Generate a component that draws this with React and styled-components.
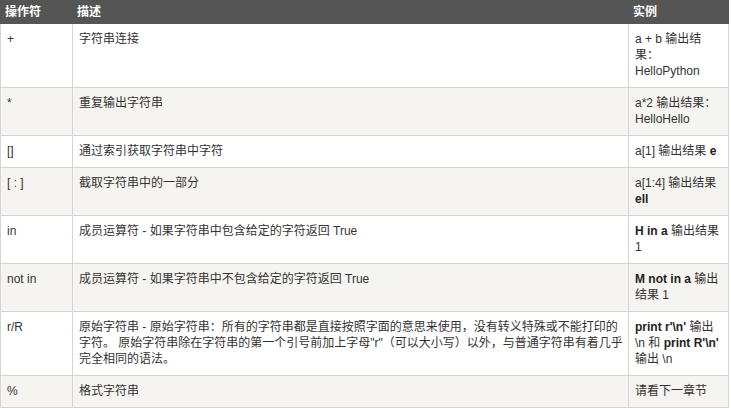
import React from "react";
import styled, { createGlobalStyle } from "styled-components";

const GlobalStyle = createGlobalStyle`
  body {
    margin: 0;
    background: #fff;
    font-family: "Liberation Sans", "Noto Sans CJK SC", sans-serif;
  }
`;

const rows = [
  { op: "+", desc: "字符串连接", example: <>a + b 输出结果：HelloPython</> },
  { op: "*", desc: "重复输出字符串", example: <>a*2 输出结果：HelloHello</> },
  { op: "[]", desc: "通过索引获取字符串中字符", example: <>a[1] 输出结果 <b>e</b></> },
  { op: "[ : ]", desc: "截取字符串中的一部分", example: <>a[1:4] 输出结果 <b>ell</b></> },
  {
    op: "in",
    desc: "成员运算符 - 如果字符串中包含给定的字符返回 True",
    example: <><b>H in a</b> 输出结果 1</>,
  },
  {
    op: "not in",
    desc: "成员运算符 - 如果字符串中不包含给定的字符返回 True",
    example: <><b>M not in a</b> 输出结果 1</>,
  },
  {
    op: "r/R",
    desc: "原始字符串 - 原始字符串：所有的字符串都是直接按照字面的意思来使用，没有转义特殊或不能打印的字符。 原始字符串除在字符串的第一个引号前加上字母\"r\"（可以大小写）以外，与普通字符串有着几乎完全相同的语法。",
    example: <><b>print r'\n'</b> 输出 \n 和 <b>print R'\n'</b> 输出 \n</>,
  },
  { op: "%", desc: "格式字符串", example: <>请看下一章节</> },
];

export default function App() {
  return (
    <>
      <GlobalStyle />
      <Table>
        <colgroup>
          <col style={{ width: 72 }} />
          <col />
          <col style={{ width: 100 }} />
        </colgroup>
        <thead>
          <tr>
            <Th>操作符</Th>
            <Th>描述</Th>
            <Th>实例</Th>
          </tr>
        </thead>
        <tbody>
          {rows.map((r) => (
            <Row key={r.op}>
              <Td>{r.op}</Td>
              <Td>{r.desc}</Td>
              <Td>{r.example}</Td>
            </Row>
          ))}
        </tbody>
      </Table>
    </>
  );
}

const Table = styled.table`
  width: 729px;
  border-collapse: collapse;
  table-layout: fixed;
  border: 1px solid #d4d4d4;
  font-size: 12px;
  color: #333;
`;

const Th = styled.th`
  background: #555;
  color: #fff;
  border: 1px solid #555;
  padding: 3px 4px;
  line-height: 16px;
  font-weight: bold;
  text-align: left;
  vertical-align: top;
`;

const Row = styled.tr`
  background: #fff;
  &:nth-child(even) {
    background: #f6f4f0;
  }
`;

const Td = styled.td`
  border: 1px solid #d4d4d4;
  padding: 7px 5px 8px 6px;
  line-height: 16px;
  vertical-align: top;
  word-wrap: break-word;

  b {
    color: #222;
  }
`;
